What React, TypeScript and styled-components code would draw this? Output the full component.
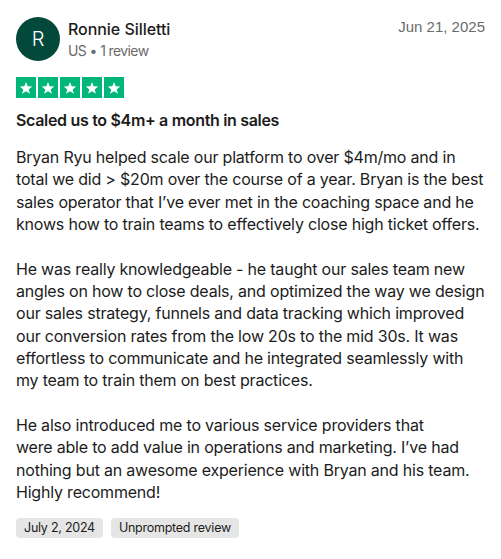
import styled, { createGlobalStyle } from 'styled-components';

const GlobalStyle = createGlobalStyle`
  body {
    margin: 0;
    background: #ffffff;
    font-family: Inter, "Noto Sans", sans-serif;
    color: #1c1c1c;
  }
`;

const Card = styled.article`
  width: 501px;
  box-sizing: border-box;
  padding: 16px 16px 20px;
`;

const Header = styled.header`
  display: flex;
  align-items: flex-start;
  gap: 8px;
`;

const Avatar = styled.div`
  width: 44px;
  height: 44px;
  border-radius: 50%;
  background: #03493b;
  color: #ffffff;
  display: flex;
  align-items: center;
  justify-content: center;
  font-size: 20px;
  font-weight: 300;
  flex-shrink: 0;
  margin-top: 1px;
`;

const Who = styled.div`
  flex: 1;
  display: flex;
  flex-direction: column;
  padding-top: 3px;
`;

const Name = styled.span`
  font-size: 16px;
  font-weight: 500;
  line-height: 20px;
  letter-spacing: -0.05px;
`;

const Meta = styled.span`
  font-size: 14px;
  line-height: 20px;
  letter-spacing: -0.6px;
  color: #6b6b6b;
  margin-top: 2px;
`;

const PostedDate = styled.time`
  font-family: "Liberation Sans", Arial, sans-serif;
  font-size: 15px;
  color: #6b6b6b;
  line-height: 20px;
  padding-top: 1px;
`;

const Stars = styled.div`
  display: flex;
  gap: 2px;
  margin-top: 16px;
`;

const StarBox = styled.span`
  width: 20px;
  height: 21px;
  background: #00b67a;
  display: flex;
  align-items: center;
  justify-content: center;
`;

const Title = styled.h2`
  margin: 10px 0 0;
  font-size: 16px;
  font-weight: 600;
  line-height: 24px;
  letter-spacing: -0.32px;
`;

const Body = styled.div`
  margin-top: 14px;
`;

const Paragraph = styled.p`
  margin: 0 0 22.33px;
  font-size: 16px;
  line-height: 22.33px;
  letter-spacing: -0.2px;
  white-space: nowrap;
  &:last-child {
    margin-bottom: 0;
  }
`;

const Tags = styled.div`
  display: flex;
  gap: 8px;
  margin-top: 15px;
`;

const Tag = styled.span`
  background: #e5e5e5;
  border-radius: 4px;
  font-size: 12.5px;
  letter-spacing: -0.25px;
  line-height: 20px;
  padding: 0 8px;
  color: #1c1c1c;
`;

// review text, broken where the published review breaks
const paragraphs: string[][] = [
  [
    'Bryan Ryu helped scale our platform to over $4m/mo and in',
    'total we did > $20m over the course of a year. Bryan is the best',
    'sales operator that I’ve ever met in the coaching space and he',
    'knows how to train teams to effectively close high ticket offers.',
  ],
  [
    'He was really knowledgeable - he taught our sales team new',
    'angles on how to close deals, and optimized the way we design',
    'our sales strategy, funnels and data tracking which improved',
    'our conversion rates from the low 20s to the mid 30s. It was',
    'effortless to communicate and he integrated seamlessly with',
    'my team to train them on best practices.',
  ],
  [
    'He also introduced me to various service providers that',
    'were able to add value in operations and marketing. I’ve had',
    'nothing but an awesome experience with Bryan and his team.',
    'Highly recommend!',
  ],
];

function Star() {
  return (
    <StarBox>
      <svg width="14" height="14" viewBox="0 0 24 24">
        <path
          fill="#ffffff"
          d="M12 1.8l2.9 7.3 7.8.4-6.1 4.9 2.1 7.6L12 17.7 5.3 22l2.1-7.6L1.3 9.5l7.8-.4z"
        />
      </svg>
    </StarBox>
  );
}

export default function App() {
  return (
    <>
      <GlobalStyle />
      <Card>
        <Header>
          <Avatar>R</Avatar>
          <Who>
            <Name>Ronnie Silletti</Name>
            <Meta>US • 1 review</Meta>
          </Who>
          <PostedDate>Jun 21, 2025</PostedDate>
        </Header>

        <Stars>
          {[0, 1, 2, 3, 4].map((i) => (
            <Star key={i} />
          ))}
        </Stars>

        <Title>Scaled us to $4m+ a month in sales</Title>

        <Body>
          {paragraphs.map((lines, i) => (
            <Paragraph key={i}>
              {lines.map((line, j) => (
                <span key={j}>
                  {j > 0 && <br />}
                  {line}
                </span>
              ))}
            </Paragraph>
          ))}
        </Body>

        <Tags>
          <Tag>July 2, 2024</Tag>
          <Tag>Unprompted review</Tag>
        </Tags>
      </Card>
    </>
  );
}
